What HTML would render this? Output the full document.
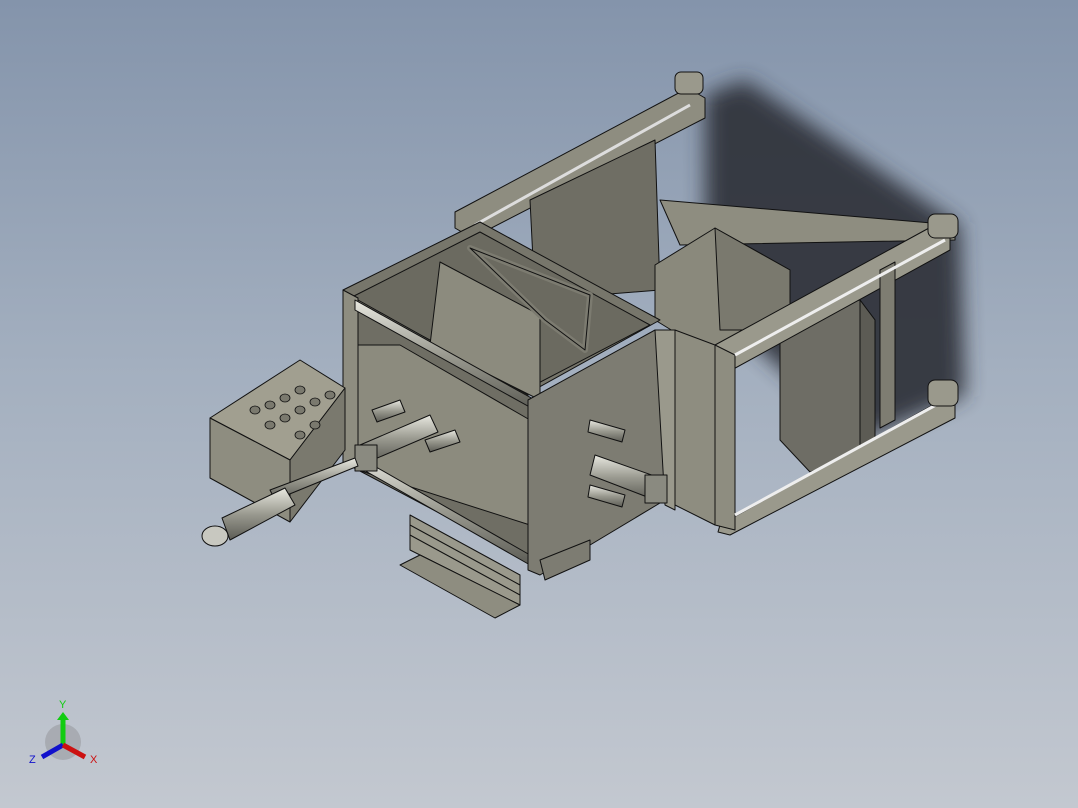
<!DOCTYPE html>
<html><head><style>
html,body{margin:0;padding:0;width:1078px;height:808px;overflow:hidden}
body{background:linear-gradient(180deg,#8494ab 0%,#a3afbf 45%,#c3c8d0 100%)}
svg{position:absolute;left:0;top:0}
</style></head><body>
<svg width="1078" height="808" viewBox="0 0 1078 808">
<defs>
<filter id="b" x="-20%" y="-20%" width="140%" height="140%"><feGaussianBlur stdDeviation="10"/></filter>
<linearGradient id="rod" x1="0" y1="0" x2="0" y2="1"><stop offset="0" stop-color="#e8e8e0"/><stop offset=".5" stop-color="#9a9a90"/><stop offset="1" stop-color="#5c5c55"/></linearGradient>
</defs>
<polygon points="705,95 745,80 960,225 965,395 860,440 705,300" fill="#30343c" filter="url(#b)" opacity=".95"/>
<g stroke="#111" stroke-width="1" stroke-linejoin="round">
<polygon points="455,212 688,88 705,98 705,118 472,238 455,228" fill="#8e8d80"/>
<polygon points="530,200 655,140 660,290 535,300" fill="#6f6e64"/>
<polygon points="660,200 955,225 955,240 680,245" fill="#8e8d80"/>
<polygon points="655,265 715,228 790,270 790,330 720,360 655,320" fill="#8a897c"/>
<polygon points="715,228 790,270 790,330 720,330" fill="#7a796e"/>
<polygon points="780,315 860,300 875,320 875,450 810,472 780,440" fill="#6e6d65"/>
<polygon points="860,300 875,320 875,450 860,455" fill="#5c5b54"/>
<polygon points="715,345 940,222 950,232 950,250 728,372 715,365" fill="#9a998c"/>
<polygon points="720,525 945,398 955,405 955,418 730,535 718,532" fill="#9a998c"/>
<polygon points="880,270 895,262 895,420 880,428" fill="#7e7d72"/>
<polygon points="715,345 735,355 735,530 715,525" fill="#8e8d80"/>
<polygon points="675,330 715,345 715,525 675,505" fill="#8e8d80"/>
<line x1="735" y1="355" x2="945" y2="240" stroke="#eee" stroke-width="3"/>
<line x1="735" y1="515" x2="945" y2="400" stroke="#eee" stroke-width="3"/>
<line x1="475" y1="225" x2="690" y2="105" stroke="#ddd" stroke-width="3"/>
<rect x="675" y="72" width="28" height="22" rx="6" fill="#9a998c"/>
<rect x="928" y="214" width="30" height="24" rx="7" fill="#9a998c"/>
<rect x="928" y="380" width="30" height="26" rx="7" fill="#9a998c"/>
<polygon points="343,290 480,222 660,320 525,395" fill="#77766b"/>
<polygon points="350,298 480,232 650,325 525,390" fill="#6b6a60"/>
<polygon points="358,300 528,395 528,560 358,470" fill="#6f6e64"/>
<polygon points="440,262 540,315 540,400 430,345" fill="#8c8b7e"/>
<polygon points="470,248 590,295 585,350 545,320" fill="none" stroke-width="6" stroke="#7c7b70"/>
<polygon points="470,248 590,295 585,350 545,320" fill="none"/>
<polygon points="343,290 358,298 358,470 343,462" fill="#8e8d80"/>
<polygon points="358,345 400,345 530,420 530,525 358,470" fill="#8c8b7e"/>
<polygon points="355,300 535,400 535,410 355,310" fill="url(#rod)"/>
<polygon points="355,455 530,555 530,565 355,465" fill="url(#rod)"/>
<polygon points="528,400 655,330 665,335 665,500 540,575 528,570" fill="#7d7c72"/>
<polygon points="655,330 675,330 675,510 665,505" fill="#9a998c"/>
<polygon points="360,445 430,415 438,432 368,462" fill="url(#rod)"/>
<rect x="355" y="445" width="22" height="26" fill="#8a8a80"/>
<polygon points="595,455 660,478 655,500 590,475" fill="url(#rod)"/>
<rect x="645" y="475" width="22" height="28" fill="#8a8a80"/>
<polygon points="590,420 625,430 622,442 588,432" fill="url(#rod)"/>
<polygon points="590,485 625,495 622,507 588,497" fill="url(#rod)"/>
<polygon points="372,410 400,400 405,412 377,422" fill="url(#rod)"/>
<polygon points="425,440 455,430 460,442 430,452" fill="url(#rod)"/>
<polygon points="410,515 520,575 520,605 410,550" fill="#9a998c"/>
<line x1="410" y1="525" x2="520" y2="585"/><line x1="410" y1="535" x2="520" y2="595"/>
<polygon points="400,565 420,555 520,605 495,618" fill="#8e8d80"/>
<polygon points="540,560 590,540 590,560 545,580" fill="#7d7c72"/>
<polygon points="210,418 300,360 345,388 290,460" fill="#a19f90"/>
<polygon points="210,418 290,460 290,522 210,478" fill="#8e8d80"/>
<polygon points="290,460 345,388 345,450 290,522" fill="#7a796e"/>
<polygon points="270,490 355,458 358,466 275,500" fill="url(#rod)"/>
<polygon points="222,518 285,488 295,505 230,540" fill="url(#rod)"/>
<ellipse cx="215" cy="536" rx="13" ry="10" fill="#c8c8c0"/>
</g>
<g fill="#7a796e" stroke="#111" stroke-width=".8">
<ellipse cx="270" cy="405" rx="5" ry="4"/><ellipse cx="285" cy="398" rx="5" ry="4"/><ellipse cx="300" cy="390" rx="5" ry="4"/>
<ellipse cx="255" cy="410" rx="5" ry="4"/><ellipse cx="285" cy="418" rx="5" ry="4"/><ellipse cx="300" cy="410" rx="5" ry="4"/>
<ellipse cx="315" cy="402" rx="5" ry="4"/><ellipse cx="270" cy="425" rx="5" ry="4"/><ellipse cx="300" cy="435" rx="5" ry="4"/>
<ellipse cx="315" cy="425" rx="5" ry="4"/><ellipse cx="330" cy="395" rx="5" ry="4"/>
</g>
<g>
<circle cx="63" cy="742" r="18" fill="#9ea1a6" opacity=".7"/>
<line x1="63" y1="745" x2="63" y2="718" stroke="#1c1" stroke-width="5"/>
<polygon points="57,720 69,720 63,712" fill="#1c1"/>
<line x1="63" y1="745" x2="42" y2="757" stroke="#11c" stroke-width="5"/>
<line x1="63" y1="745" x2="85" y2="757" stroke="#c11" stroke-width="5"/>
<text x="59" y="708" font-family="Liberation Sans,sans-serif" font-size="11" fill="#1c1">Y</text>
<text x="29" y="763" font-family="Liberation Sans,sans-serif" font-size="11" fill="#11c">Z</text>
<text x="90" y="763" font-family="Liberation Sans,sans-serif" font-size="11" fill="#c11">X</text>
</g>
</svg>
</body></html>
